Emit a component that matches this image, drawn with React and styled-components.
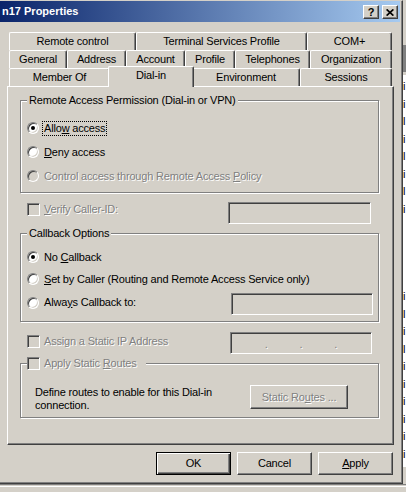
import React from 'react';
import styled, { createGlobalStyle, css } from 'styled-components';

const FACE = '#d4d0c8';
const SHADOW = '#808080';
const DARK = '#404040';

const GlobalStyle = createGlobalStyle`
  html, body {
    margin: 0;
    padding: 0;
  }
  body {
    background: ${FACE};
    font-family: "Liberation Sans", Arial, sans-serif;
    font-size: 11px;
    line-height: 13px;
    letter-spacing: -0.18px;
    color: #000;
  }
  u {
    text-decoration-thickness: 1px;
    text-underline-offset: 1px;
  }
`;

const Screen = styled.div`
  width: 406px;
  height: 492px;
  display: flex;
  flex-direction: column;
  overflow: hidden;
`;

const TopArea = styled.div`
  display: flex;
  height: 484px;
  flex: none;
`;

const Dialog = styled.div`
  box-sizing: border-box;
  width: 403px;
  height: 484px;
  flex: none;
  display: flex;
  flex-direction: column;
  background: ${FACE};
  border-top: 1px solid ${FACE};
  border-right: 1px solid ${DARK};
  border-bottom: 1px solid ${DARK};
  box-shadow: inset -1px -1px ${SHADOW};
`;

const TitleBar = styled.div`
  height: 21px;
  margin-right: 2px;
  display: flex;
  align-items: center;
  justify-content: space-between;
  padding: 0 2px;
  background: linear-gradient(to right, #0a246a, #a6caf0);
`;

const TitleText = styled.span`
  color: #fff;
  font-weight: bold;
  letter-spacing: 0;
`;

const CaptionButtons = styled.div`
  display: flex;
  gap: 3px;
  margin-top: 1px;
`;

const CaptionButton = styled.div`
  box-sizing: border-box;
  width: 16px;
  height: 14px;
  display: flex;
  align-items: center;
  justify-content: center;
  background: ${FACE};
  border: 1px solid;
  border-color: #fff ${DARK} ${DARK} #fff;
  box-shadow: inset -1px -1px ${SHADOW};
  font-weight: bold;
  font-size: 11px;
  letter-spacing: 0;
`;

const Body = styled.div`
  flex: 1;
  display: flex;
  flex-direction: column;
  padding: 10px 8px 0 7px;
`;

const TabStrip = styled.div`
  display: flex;
  flex-direction: column;
  margin: 0 2px;
`;

const TabRow = styled.div`
  display: flex;
  height: 18px;
`;

const Tab = styled.div`
  box-sizing: border-box;
  flex: none;
  width: ${(p) => p.$w}px;
  height: 18px;
  display: flex;
  align-items: center;
  justify-content: center;
  white-space: nowrap;
  background: ${FACE};
  border-top: 1px solid #fff;
  border-left: 1px solid #fff;
  border-right: 1px solid ${DARK};
  border-radius: 2px 2px 0 0;
  box-shadow: inset -1px 0 ${SHADOW};
  ${(p) =>
    p.$active &&
    css`
      position: relative;
      z-index: 1;
      width: ${p.$w + 4}px;
      height: 21px;
      margin: -2px -2px -1px;
      padding-bottom: 3px;
    `}
`;

const Panel = styled.div`
  box-sizing: border-box;
  height: 359px;
  flex: none;
  display: flex;
  flex-direction: column;
  padding: 0 12px;
  border: 1px solid;
  border-color: #fff ${DARK} ${DARK} #fff;
  box-shadow: inset -1px -1px ${SHADOW};
`;

const GroupBox = styled.div`
  position: relative;
  box-sizing: border-box;
  height: ${(p) => p.$h}px;
  margin: ${(p) => p.$mt}px 2px 0 0;
  padding: ${(p) => p.$pad};
  border: 1px solid ${SHADOW};
  box-shadow: inset 1px 1px #fff, 1px 1px #fff;
  display: flex;
  flex-direction: column;
`;

const GroupTitle = styled.div`
  position: absolute;
  top: -7px;
  left: 6px;
  height: 13px;
  display: flex;
  align-items: center;
  gap: 4px;
  padding: ${(p) => p.$pad || '0 2px'};
  background: ${FACE};
  white-space: nowrap;
`;

const OptionRow = styled.div`
  display: flex;
  align-items: center;
  height: ${(p) => p.$h}px;
`;

const FieldRow = styled.div`
  display: flex;
  align-items: flex-start;
  justify-content: space-between;
  height: 22px;
  margin-top: ${(p) => p.$mt}px;
  padding: ${(p) => p.$pad || '0'};
`;

const Option = styled.div`
  display: flex;
  align-items: center;
  height: 13px;
  gap: ${(p) => (p.$box ? 4 : 5)}px;
  margin-top: ${(p) => p.$mt || 0}px;
  white-space: nowrap;
`;

const Radio = styled.span`
  box-sizing: border-box;
  flex: none;
  width: 12px;
  height: 12px;
  border-radius: 50%;
  border: 1px solid;
  border-color: ${SHADOW} #fff #fff ${SHADOW};
  box-shadow: inset 1px 1px ${DARK}, inset -1px -1px ${FACE};
  background: ${(p) => (p.$disabled ? FACE : '#fff')};
  display: flex;
  align-items: center;
  justify-content: center;

  &::after {
    content: '';
    display: ${(p) => (p.$checked ? 'block' : 'none')};
    width: 4px;
    height: 4px;
    border-radius: 50%;
    background: #000;
  }
`;

const CheckBox = styled.span`
  box-sizing: border-box;
  flex: none;
  width: 13px;
  height: 13px;
  border: 1px solid;
  border-color: ${SHADOW} #fff #fff ${SHADOW};
  box-shadow: inset 1px 1px ${DARK}, inset -1px -1px ${FACE};
  background: ${FACE};
`;

const Label = styled.span`
  ${(p) =>
    p.$disabled &&
    css`
      color: ${SHADOW};
      text-shadow: 1px 1px #fff;
    `}
  ${(p) =>
    p.$focus &&
    css`
      border: 1px dotted #000;
      padding: 0 1px;
      margin-left: -2px;
    `}
`;

const TextBox = styled.div`
  box-sizing: border-box;
  flex: none;
  width: ${(p) => p.$w}px;
  height: 22px;
  border: 1px solid;
  border-color: ${SHADOW} #fff #fff ${SHADOW};
  box-shadow: inset 1px 1px ${DARK}, inset -1px -1px ${FACE};
  background: ${FACE};
  display: flex;
  align-items: center;
  padding: 0 2px;
`;

const IpPart = styled.span`
  flex: 1;
`;

const IpDot = styled.span`
  color: ${SHADOW};
  text-shadow: 1px 1px #fff;
  margin-top: 2px;
`;

const RoutesRow = styled.div`
  display: flex;
  align-items: flex-start;
  justify-content: space-between;
`;

const RoutesText = styled.div`
  margin-top: 1px;
`;

const PushButton = styled.div`
  box-sizing: border-box;
  flex: none;
  width: ${(p) => p.$w}px;
  height: ${(p) => p.$h || 23}px;
  display: flex;
  align-items: center;
  justify-content: center;
  background: ${FACE};
  border: 1px solid;
  border-color: #fff ${DARK} ${DARK} #fff;
  box-shadow: inset -1px -1px ${SHADOW};
  ${(p) =>
    p.$default &&
    css`
      border-color: #000;
      box-shadow: inset 1px 1px #fff, inset -1px -1px ${DARK}, inset -2px -2px ${SHADOW};
    `}
`;

const ButtonRow = styled.div`
  display: flex;
  justify-content: flex-end;
  gap: 6px;
  margin-top: 7px;
  padding-right: 1px;
`;

const BackWindow = styled.div`
  flex: 1;
  display: flex;
  flex-direction: column;
  overflow: hidden;
`;

const BackBand = styled.div`
  flex: none;
  height: ${(p) => p.$h}px;
  background: ${(p) => p.$bg};
`;

const BackList = styled.div`
  flex: 1;
  background: #fff;
  padding-top: 3px;
  white-space: nowrap;
  line-height: 17.5px;
  letter-spacing: 0;
`;

const BottomStrip = styled.div`
  flex: 1;
  border-top: 1px solid ${SHADOW};
  background: linear-gradient(to bottom, ${FACE} 0 1px, #fff 1px 2px, ${FACE} 2px);
`;

const tabRows = [
  [
    ['Remote control', 127],
    ['Terminal Services Profile', 171],
    ['COM+', 85],
  ],
  [
    ['General', 58],
    ['Address', 59],
    ['Account', 59],
    ['Profile', 50],
    ['Telephones', 75],
    ['Organization', 82],
  ],
  [
    ['Member Of', 101],
    ['Dial-in', 82, true],
    ['Environment', 108],
    ['Sessions', 92],
  ],
];

const backLines = ['i', 'i', 'l', 'i', 'l', 'i', 'l', 'i', '', '', '', '', 'i', 'l', 'i', 'l', 'i', 'i', 'i', 'i', 'i', 'i'];

const CloseGlyph = () => (
  <svg width="8" height="7" viewBox="0 0 8 7">
    <path d="M0.6 0.4L7.4 6.6M7.4 0.4L0.6 6.6" stroke="#000" strokeWidth="1.7" />
  </svg>
);

const App = () => {
  return (
    <Screen>
      <GlobalStyle />
      <TopArea>
        <Dialog>
          <TitleBar>
            <TitleText>n17 Properties</TitleText>
            <CaptionButtons>
              <CaptionButton>?</CaptionButton>
              <CaptionButton>
                <CloseGlyph />
              </CaptionButton>
            </CaptionButtons>
          </TitleBar>

          <Body>
            <TabStrip>
              {tabRows.map((row, i) => (
                <TabRow key={i}>
                  {row.map(([name, w, active]) => (
                    <Tab key={name} $w={w} $active={active}>
                      {name}
                    </Tab>
                  ))}
                </TabRow>
              ))}
            </TabStrip>

            <Panel>
              <GroupBox $h={93} $mt={13} $pad="15px 6px 0">
                <GroupTitle>Remote Access Permission (Dial-in or VPN)</GroupTitle>
                <OptionRow $h={24}>
                  <Option>
                    <Radio $checked />
                    <Label $focus>
                      Allo<u>w</u> access
                    </Label>
                  </Option>
                </OptionRow>
                <OptionRow $h={24}>
                  <Option>
                    <Radio />
                    <Label>
                      <u>D</u>eny access
                    </Label>
                  </Option>
                </OptionRow>
                <OptionRow $h={24}>
                  <Option>
                    <Radio $disabled />
                    <Label $disabled>
                      Control access through Remote Access <u>P</u>olicy
                    </Label>
                  </Option>
                </OptionRow>
              </GroupBox>

              <FieldRow $mt={9} $pad="0 10px 0 7px">
                <Option $box $mt={1}>
                  <CheckBox />
                  <Label $disabled>
                    <u>V</u>erify Caller-ID:
                  </Label>
                </Option>
                <TextBox $w={143} />
              </FieldRow>

              <GroupBox $h={89} $mt={9} $pad="12px 5px 0 6px">
                <GroupTitle>Callback Options</GroupTitle>
                <OptionRow $h={22}>
                  <Option>
                    <Radio $checked />
                    <Label>
                      No <u>C</u>allback
                    </Label>
                  </Option>
                </OptionRow>
                <OptionRow $h={22}>
                  <Option>
                    <Radio />
                    <Label>
                      <u>S</u>et by Caller (Routing and Remote Access Service only)
                    </Label>
                  </Option>
                </OptionRow>
                <FieldRow $mt={3}>
                  <Option $mt={3}>
                    <Radio />
                    <Label>
                      Alwa<u>y</u>s Callback to:
                    </Label>
                  </Option>
                  <TextBox $w={142} />
                </FieldRow>
              </GroupBox>

              <FieldRow $mt={10} $pad="0 9px 0 7px">
                <Option $box $mt={3}>
                  <CheckBox />
                  <Label $disabled>
                    Assi<u>g</u>n a Static IP Address
                  </Label>
                </Option>
                <TextBox $w={142}>
                  <IpPart />
                  <IpDot>.</IpDot>
                  <IpPart />
                  <IpDot>.</IpDot>
                  <IpPart />
                  <IpDot>.</IpDot>
                  <IpPart />
                </TextBox>
              </FieldRow>

              <GroupBox $h={55} $mt={9} $pad="21px 30px 0 14px">
                <GroupTitle $pad="0 9px 0 0">
                  <CheckBox />
                  <Label $disabled>
                    Apply Static <u>R</u>outes
                  </Label>
                </GroupTitle>
                <RoutesRow>
                  <RoutesText>
                    Define routes to enable for this Dial-in
                    <br />
                    connection.
                  </RoutesText>
                  <PushButton $w={98} $h={24}>
                    <Label $disabled>
                      Static Ro<u>u</u>tes ...
                    </Label>
                  </PushButton>
                </RoutesRow>
              </GroupBox>
            </Panel>

            <ButtonRow>
              <PushButton $w={75} $default>
                OK
              </PushButton>
              <PushButton $w={75}>Cancel</PushButton>
              <PushButton $w={75}>
                <u>A</u>pply
              </PushButton>
            </ButtonRow>
          </Body>
        </Dialog>

        <BackWindow>
          <BackBand $h={45} $bg={FACE} />
          <BackBand $h={27} $bg={SHADOW} />
          <BackBand $h={3} $bg={FACE} />
          <BackList>
            {backLines.map((t, i) => (
              <div key={i}>{t || '\u00a0'}</div>
            ))}
          </BackList>
          <BackBand $h={17} $bg={FACE} />
        </BackWindow>
      </TopArea>
      <BottomStrip />
    </Screen>
  );
};

export default App;
